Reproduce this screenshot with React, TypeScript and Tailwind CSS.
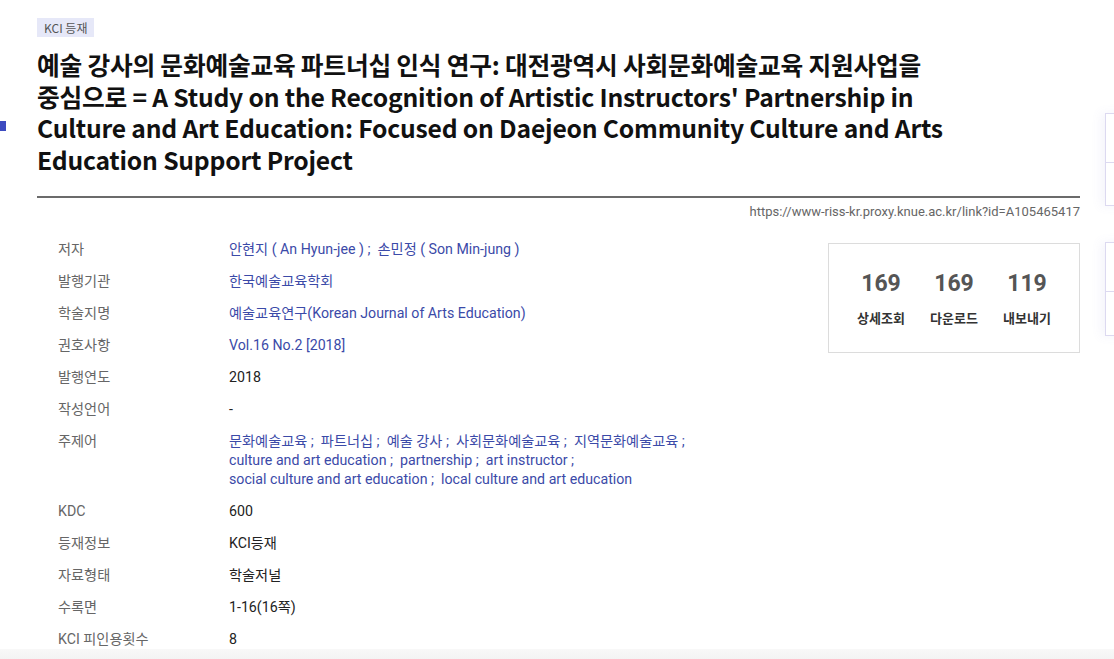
import React from "react";

const rows: { label: string; value: React.ReactNode; link?: boolean }[] = [
  {
    label: "저자",
    link: true,
    value: (
      <>
        안현지 ( An Hyun-jee ) ;&nbsp; 손민정 ( Son Min-jung )
      </>
    ),
  },
  { label: "발행기관", link: true, value: "한국예술교육학회" },
  { label: "학술지명", link: true, value: "예술교육연구(Korean Journal of Arts Education)" },
  { label: "권호사항", link: true, value: "Vol.16 No.2 [2018]" },
  { label: "발행연도", value: "2018" },
  { label: "작성언어", value: "-" },
  {
    label: "주제어",
    link: true,
    value: (
      <>
        문화예술교육 ;&nbsp; 파트너십 ;&nbsp; 예술 강사 ;&nbsp; 사회문화예술교육 ;&nbsp; 지역문화예술교육 ;
        <br />
        culture and art education ;&nbsp; partnership ;&nbsp; art instructor ;
        <br />
        social culture and art education ;&nbsp; local culture and art education
      </>
    ),
  },
  { label: "KDC", value: "600" },
  { label: "등재정보", value: "KCI등재" },
  { label: "자료형태", value: "학술저널" },
  { label: "수록면", value: "1-16(16쪽)" },
  { label: "KCI 피인용횟수", value: "8" },
];

const stats = [
  { num: "169", label: "상세조회" },
  { num: "169", label: "다운로드" },
  { num: "119", label: "내보내기" },
];

export default function App() {
  return (
    <div className="relative w-[1114px] h-[659px] overflow-hidden bg-white font-['Roboto','Noto_Sans_CJK_KR',sans-serif]">
      {/* left edge marker */}
      <div className="absolute left-0 top-[121px] w-[6px] h-[10px] bg-[#3d4bc0]" />

      {/* right side floating boxes */}
      <div className="absolute left-[1105px] top-[113px] w-[40px] h-[93px] border border-[#dcd9f0] bg-white shadow-[-4px_0_10px_rgba(120,110,200,0.08)] flex flex-col">
        <div className="h-[49px] border-b border-[#dcd9f0]" />
      </div>
      <div className="absolute left-[1105px] top-[242px] w-[40px] h-[94px] border border-[#dcd9f0] bg-white shadow-[-4px_0_10px_rgba(120,110,200,0.08)] flex flex-col">
        <div className="h-[49px] border-b border-[#dcd9f0]" />
      </div>

      <div className="ml-[37px] w-[1043px] pt-[16px]">
        <span className="inline-block bg-[#e6e8f8] px-[7px] h-[19px] leading-[19px] text-[12px] text-[#555] font-['Noto_Sans_CJK_KR',sans-serif]">
          KCI 등재
        </span>

        <h1 className="mt-[9px] w-[915px] break-keep text-[24.7px] leading-[31.5px] font-bold text-[#111] tracking-[-0.2px] font-['Noto_Sans_CJK_KR',sans-serif]">
          예술 강사의 문화예술교육 파트너십 인식 연구: 대전광역시 사회문화예술교육 지원사업을 중심으로 = A Study on the Recognition of Artistic Instructors' Partnership in Culture and Art Education: Focused on Daejeon Community Culture and Arts Education Support Project
        </h1>

        <div className="mt-[21px] h-[2px] bg-[#6b6b6b]" />
        <div className="mt-[6px] text-right text-[13px] leading-[16px] text-[#666]">
          https://www-riss-kr.proxy.knue.ac.kr/link?id=A105465417
        </div>

        <div className="mt-[13px] flex justify-between">
          <div className="flex flex-col">
            {rows.map((r) => (
              <div key={r.label} className="flex py-[6.5px] text-[14.2px] leading-[19px]">
                <div className="w-[192px] pl-[21px] text-[#666]">{r.label}</div>
                <div className={r.link ? "text-[#3b4aa8]" : "text-[#222]"}>{r.value}</div>
              </div>
            ))}
          </div>

          <div className="mt-[10px] w-[252px] h-[110px] border border-[#dcdcdc] flex justify-center items-start pt-[26px] gap-[22px]">
            {stats.map((s, i) => (
              <div key={i} className="flex flex-col items-center w-[51px]">
                <div className="text-[23px] leading-[28px] font-bold text-[#555]">{s.num}</div>
                <div className="mt-[11px] text-[13px] leading-[18px] font-bold text-[#333] font-['Noto_Sans_CJK_KR',sans-serif]">
                  {s.label}
                </div>
              </div>
            ))}
          </div>
        </div>
      </div>

      {/* bottom shade */}
      <div className="absolute left-0 right-0 bottom-0 h-[10px] bg-gradient-to-b from-[#f8f8f8] to-[#f3f3f3]" />
    </div>
  );
}
